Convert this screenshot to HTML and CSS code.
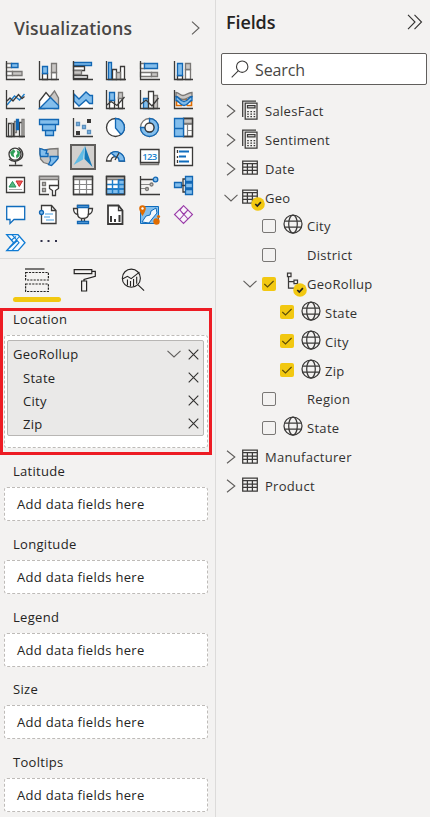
FILE: index.html
```html
<!DOCTYPE html>
<html lang="en">
<head>
<meta charset="utf-8">
<title>Report panes</title>
<link rel="stylesheet" href="styles.css">
</head>
<body>
<svg class="defs" aria-hidden="true">
  <symbol id="right" viewBox="0 0 10 14"><path class="thin" d="M1 .7 8.8 7 1 13.3"/></symbol>
  <symbol id="down" viewBox="0 0 14 8"><path class="thin" d="M.5.8 7 7 13.5.8"/></symbol>
  <symbol id="close" viewBox="0 0 11 11"><path class="thin dark" d="M.7.7l9.6 9.6M10.3.7.7 10.3"/></symbol>
  <symbol id="calc" viewBox="0 0 16 20"><path class="k" d="M.7 17V1.2H14"/><path class="k" d="M3.2 3.2H15V19H3.2z"/><path class="k" d="M5.5 5.5h7.5v2.3H5.5z"/><path class="k dots" d="M5.2 11.5h9M5.2 14h9M5.2 16.5h9"/></symbol>
  <symbol id="table" viewBox="0 0 16 15"><path class="k" d="M.7 1h14.6v13H.7zM.7 3.6h14.6M.7 7h14.6M.7 10.4h14.6M5.4 3.6V14M10.4 3.6V14"/></symbol>
  <symbol id="globe" viewBox="0 0 20 20"><circle class="k" cx="10" cy="10" r="9"/><ellipse class="k" cx="10" cy="10" rx="4.3" ry="9"/><path class="k" d="M1.5 7h17M1.5 13h17"/></symbol>
  <symbol id="tick" viewBox="0 0 14 14"><path class="tickline" d="M2.3 7 5.5 10 11.6 4"/></symbol>
  <symbol id="badge" viewBox="0 0 14 14"><circle cx="7" cy="7" r="6.8" fill="#f2c811"/><path d="M4.3 7l2 2 3.6-3.8" fill="none" stroke="#222" stroke-width="1.7"/></symbol>
</svg>
<div class="app">
<section class="visualizations">
  <header class="viz-head"><h2>Visualizations</h2><svg class="chev-head" viewBox="0 0 9 14"><path class="thin" d="M1 .7 8 7 1 13.300"/></svg></header>
  <div class="gallery">
    <svg viewBox="0 0 20 20"><path class="g w" d="M.5 2.500h5v4h-5zM.5 10.500h6v4h-6z"/><path class="b" d="M5.500 2.500h6.500v4H5.500z"/><path class="g" d="M6.500 10.500h9.500v4H6.500z"/><path class="a" d="M.5 0v18.500H19"/></svg>
    <svg viewBox="0 0 20 20"><path class="g w" d="M12.500 11.500h5v7h-5z"/><path class="d w" d="M3.500 12.500h5v6h-5z"/><path class="b" d="M3.500 5.500h5v7h-5z"/><path class="g" d="M12.500 2.500h5v9h-5z"/><path class="a" d="M.5 0v18.500H20"/></svg>
    <svg viewBox="0 0 20 20"><path class="b" d="M.5 1.500h18v3H.5z"/><path class="d w" d="M.5 5.500h11v4H.5zM.5 14.500h14v3H.5z"/><path class="g" d="M.5 9.500h8v4h-8z"/><path class="a" d="M.5 0v18.500H20"/></svg>
    <svg viewBox="0 0 20 20"><path class="b" d="M2.500 1.500h3v17h-3z"/><path class="d w" d="M6.500 8.500h4v10h-4zM14.500 5.500h4v13h-4z"/><path class="g" d="M10.500 11.500h4v7h-4z"/><path class="a" d="M.5 0v18.500H20"/></svg>
    <svg viewBox="0 0 20 20"><path class="g w" d="M.5 2.500h4v5h-4zM.5 11.500h11v4H.5z"/><path class="b" d="M4.500 2.500h13v5h-13z"/><path class="g" d="M11.500 11.500h6v4h-6z"/><path class="a" d="M.5 0v18.500H20"/></svg>
    <svg viewBox="0 0 20 20"><path class="g w" d="M11.500 8.500h5v10h-5z"/><path class="d w" d="M3.500 14.500h5v4h-5z"/><path class="b" d="M3.500 2.500h5v12h-5z"/><path class="g" d="M11.500 2.500h5v6h-5z"/><path class="a" d="M.5 0v18.500H19"/></svg>

    <svg viewBox="0 0 20 20"><path class="bl" d="M1 15 8.500 6l5 4L18.500 4"/><path class="a" d="M1 11 4 8l3 3 5.500-6.500 3.500 4 2.500-2M.5 0v18.500H19"/></svg>
    <svg viewBox="0 0 20 20"><path class="g" d="M10 8 15.500 1l4 7v10.500H15z"/><path class="d w" d="M.5 11 7 2.500l6 7L6 18.500H.5z"/><path class="b" d="M.5 18.500 11.500 7.500l8 8v3z"/></svg>
    <svg viewBox="0 0 20 20"><path class="w" d="M1 13l5 3 7-5 6 4v4H1z"/><path class="b" d="M1 4l5 5 7-7 4 3.500h2.500v8h-3L13 10l-7 6-5-5z"/><path class="a" d="M.5 0v18.500H20"/></svg>
    <svg viewBox="0 0 20 20"><path class="d w" d="M3.500 9.500h5v9h-5zM12.500 7.500h4v11h-4z"/><path class="b" d="M3.500 2.500h5v8h-5z"/><path class="g" d="M12.500 2.500h4v6h-4z"/><path class="a" d="M1 15l4-3.500 6 4L18.500 7M.5 0v18.500H19"/></svg>
    <svg viewBox="0 0 20 20"><path class="g" d="M13.500 5.500h4v13h-4z"/><path class="b" d="M3.500 8.500h5v10h-5z"/><path class="d w" d="M8.500 1.500h5v17h-5z"/><path class="a" d="M1 14l5-4 6 6 6.500-8M.5 0v18.500H20"/></svg>
    <svg viewBox="0 0 20 20"><path class="w" d="M2 12h4v4H2zM14 12h4v4h-4z"/><path d="M2.500 11.500h3l2-2h5l2 2h3v4h-4l-3-3-3 3h-5z" fill="none" stroke="#e06c00" stroke-width="1.600"/><path class="g" d="M2 2.500c3 0 4 3 7 3s5-3 9-3v4c-4 0-5 3-9 3s-5-3-7-3z"/><path class="b" d="M2 6.500c3 0 4 5 8 5s5-5 8-5v4c-3 0-4 5-8 5s-5-5-8-5z"/><path class="a" d="M.5 0v18.500H19"/></svg>

    <svg viewBox="0 0 20 20"><path class="d w" d="M2.500 5.500h3v13h-3zM13.500 4.500h3v14h-3z"/><path class="g" d="M5.500 5.500h3v13h-3zM8.500 3.500h2v11h-2zM16 1.500h2v17h-2z"/><path class="b solid" d="M10.500 1.500h2v10h-2z"/><path class="a" d="M.5 0v18.500H19M7.500 5v13"/></svg>
    <svg viewBox="0 0 20 20"><path class="b" d="M.5 1.500h19v5H.5zM3.500 6.500h13v6h-13zM6.500 12.500h8v5h-8z"/></svg>
    <svg viewBox="0 0 20 20"><path d="M14 1h4v4h-4zM3 13h4v4H3z" fill="#3b3a39"/><path class="b faint" d="M3.500 4.500h3v3h-3zM9.500 7.500h3v3h-3zM14.500 12.500h3v3h-3z"/><path class="a" d="M.5 0v18.500H20"/></svg>
    <svg viewBox="0 0 20 20"><circle class="d w" cx="9.500" cy="9.500" r="9"/><path class="b" d="M9.500.500a9 9 0 0 1 5.500 16L9.500 10z"/></svg>
    <svg viewBox="0 0 20 20"><circle class="g w" cx="9.500" cy="9.500" r="9"/><path class="b" d="M9.500.500a9 9 0 1 1-9 9H5a4.500 4.500 0 1 0 4.500-4.500z"/><circle class="d bg" cx="9.500" cy="9.500" r="4.500"/></svg>
    <svg viewBox="0 0 20 20"><path class="d w" d="M9.500.500h9v18h-9z"/><path class="g" d="M9.500.500h9v5h-9z"/><path class="gl" d="M9.500 6.500h9M13.500 6.500v12M13.500 12.500h5"/><path class="a" d="M9.500.500h9v18h-9"/><path class="b" d="M.5.500h9v10h-9zM.500 10.500h9v8h-9z"/></svg>

    <svg viewBox="0 0 20 20"><path class="a" d="M12.500.500c5 3 5.500 8.500 2 11.500s-8.500 3-11.500 0M9.500 14v3.500M3 18.500h13.500"/><circle class="d w" cx="9" cy="7.200" r="6"/><path d="M4 5.500l3.500-3.300 2 2L7.500 7l1 3.500L5.500 9zM10.500 3l3.500 2-.5 4-3 2.500-.5-3 1.500-2z" fill="#2f9e58"/></svg>
    <svg viewBox="0 0 20 20"><path class="g" d="M1 1.500l5 1.500 5-1 8-.500v9l-2.500 3-4 4.500-3-1-5-1.500-3-3.500V9.500L1 7z"/><path class="b" d="M1 1.500l5 1.500h2l-1 3.500h2V9.500H1.500L1 7zM11 9.500h8v2l-2.500 3-4 4-3-1 2-4z"/></svg>
    <div class="selected"><svg viewBox="0 0 26 26"><path d="M15 2 3.500 21 13 15.500z" fill="#5ebbe6"/><path d="M15 2v12l-2 1.500z" fill="#a2d8ef"/><path d="M15 2 22.500 23 14.500 15z" fill="#1478b8"/></svg></div>
    <svg viewBox="0 0 20 20"><path class="d w" d="M.5 14A9 9 0 0 1 18.500 14H14a4.500 4.500 0 0 0-9 0z"/><path class="b" d="M5 6a9 9 0 0 1 13.500 8H13c0-2-1-4-3-4z"/><path class="a" d="M13 6l-4 7"/></svg>
    <svg viewBox="0 0 20 20"><path class="g" d="M.5 14h18v3.500H.500z"/><path class="d w" d="M.5 2.500h18.500v13H.500z"/><text x="2.200" y="12.900" font-size="9.500" textLength="15" class="num">123</text></svg>
    <svg viewBox="0 0 20 20"><path class="d w" d="M.5.500h18v18H.500z"/><path d="M3.500 3v3M3.500 9v2M3.500 13v3" stroke="#3b3a39" stroke-width="1.300"/><path d="M5 4.500h10M5 9.500h7M5 14.500h10" stroke="#0f6cbd" stroke-width="2"/></svg>

    <svg viewBox="0 0 20 20"><path class="d w" d="M.5 1.500h18v15H.500z"/><path d="M3 11l3.500-5.500L10 11z" fill="#56b982" stroke="#25905a"/><path d="M10 5h6.500l-3.200 5.500z" fill="#f05a5a" stroke="#cf2e2e"/><path d="M3 13.500h13" stroke="#aaa"/></svg>
    <svg viewBox="0 0 20 20"><path class="d w" d="M.5.500h19v18H.500z"/><path class="g" d="M.5.500h19v3H.500zM3.500 6.500h3v3h-3zM3.500 12.500h3v3h-3z"/><path d="M10 9h11v11H10z" fill="#f3f2f1"/><path class="d w" d="M10.500 9.500h9v3l-3 2v5h-3v-5l-3-2z"/></svg>
    <svg viewBox="0 0 20 20"><path class="d w" d="M.5.500h19v18H.500z"/><path class="g" d="M.5.500h19v3H.500z"/><path class="gl" d="M.5 8.500h19M.5 13.500h19M6.500 4v14M13.500 4v14"/><path class="a" d="M.5.500h19v18H.500z"/></svg>
    <svg viewBox="0 0 20 20"><path class="d w" d="M.5.500h18v18H.500z"/><path class="g" d="M.5.500h18v3H.500z"/><path class="b" d="M12.500 4h6v14h-6zM.5 13h18v5H.500z"/><path class="bl" d="M.5 8.500h18M.5 13h18M6.500 4v14M12.500 4v14"/><path class="a" d="M.5.500h18v18H.500z"/></svg>
    <svg viewBox="0 0 20 20"><path class="gl" d="M.5 8.500h10M.5 12.500h6"/><path class="a" d="M.5 3.500h13M.5 0v18.500H20"/><circle class="b" cx="15.500" cy="3.500" r="2.300"/><circle class="g" cx="11.500" cy="8.500" r="1.500"/><circle class="g" cx="7" cy="13" r="1.500"/></svg>
    <svg viewBox="0 0 20 20"><path class="a" d="M6 9.500h6M12 3h-3v13h3"/><path class="b" d="M.5 6.500h7v5h-7zM11.500.500h7v5h-7zM11.500 7h7v5h-7zM11.500 13.500h7v5h-7z"/></svg>

    <svg viewBox="0 0 20 20"><path d="M.7 1.500h18v13H8l-4 4v-4H.700z" fill="#fff" stroke="#0f6cbd" stroke-width="1.300"/></svg>
    <svg viewBox="0 0 20 20"><path class="d w" d="M2.500.500h10l4.500 5v13H2.500z"/><path class="a" d="M12.500.500v5H17"/><path d="M6 9h8M5 12h6M7 15h8" stroke="#83beec" stroke-width="1.400"/><circle class="b" cx="2.500" cy="7.500" r="2"/></svg>
    <svg viewBox="0 0 20 20"><path class="d w" d="M4.500.500h11v8c0 3-2 5-5.500 5s-5.500-2-5.500-5zM4.500 3.500h-4c0 4 1 6 5 6M15.500 3.500h4c0 4-1 6-5 6M8.500 13.500h3v3h-3z"/><path class="b" d="M4.500.500h11v2h-11zM4.500 16.500h11v2h-11z"/></svg>
    <svg viewBox="0 0 20 20"><path class="d w heavy" d="M2 .500h10.500l4 5V19H2z"/><path class="a" d="M12.500.500v5H17"/><path d="M5 11v6M9 14v3M13.500 10v7" stroke="#3b3a39" stroke-width="2"/></svg>
    <svg viewBox="0 0 20 20"><path d="M.5 1.500h18v17H.500z" fill="#83beec" stroke="#0f6cbd"/><path d="M2 17l4-6 4-1 1-4 5-3 1 5-5 6-3 4z" fill="#f3f8fc" stroke="#0f6cbd"/><path d="M2.500 11S-.8 6-.8 3.500a3.300 3.300 0 0 1 6.600 0C5.800 6 2.500 11 2.500 11z" fill="#e06c00"/><circle cx="2.500" cy="3.500" r="1.200" fill="#fff"/><circle cx="16.500" cy="16.500" r="3.200" fill="#e06c00"/><circle cx="18.500" cy="11.500" r="1.600" fill="#e06c00"/></svg>
    <svg viewBox="0 0 20 20"><path d="M9.500.700 18.500 9.500l-9 9-9-9zM6 5l8 9M14 5l-8 9M9.500.700 14 5 9.500 9.500 6 5z" fill="#f8f2fa" stroke="#9a3ca8" stroke-width="1.100"/></svg>

    <svg viewBox="0 0 20 20"><path d="M.7.700H12l7 8-7 8H.700l7-8z" fill="#f5faff" stroke="#0f7bd4" stroke-width="1.300"/><path d="M6 .700l7 8-7 8M5.500 6l4.500-3.500M8 8.500l5-5.500M3.500 13.500l8-7" fill="none" stroke="#0f7bd4" stroke-width="1.100"/></svg>
    <svg viewBox="0 0 20 20"><path d="M1.500 7h2M8.500 7h2M16 7h2" stroke="#30304a" stroke-width="2"/></svg>
  </div>
  <nav class="tabs">
    <svg viewBox="0 0 24 24"><path class="t" d="M0 1h19.500"/><path class="t dash" d="M.6 4.500h22.800v7.500H.600zM.6 16h22.800v7.500H.600z"/></svg>
    <svg viewBox="0 0 24 24"><path class="t" d="M1.200 1.600h17.600v4H1.200zM18.800 3.300h3.500v5L11 11.500V13M8.600 13h5v10h-5z"/></svg>
    <svg viewBox="0 0 26 26"><circle class="t" cx="11.200" cy="11" r="9.800"/><path class="t" d="M18.500 18.200 25 24.500M1.500 12 7 9l4 2.500L20 4.500M7 12.500V19M10.300 14v6M13.600 12v8M17 9.500V17"/></svg>
  </nav>
  <div class="tab-line"></div>
  <div class="location">
    <h3>Location</h3>
    <div class="well">
      <div class="pill">
        <div class="item"><span>GeoRollup</span><svg class="down"><use href="#down"/></svg><svg class="close"><use href="#close"/></svg></div>
        <div class="item sub"><span>State</span><svg class="close"><use href="#close"/></svg></div>
        <div class="item sub"><span>City</span><svg class="close"><use href="#close"/></svg></div>
        <div class="item sub"><span>Zip</span><svg class="close"><use href="#close"/></svg></div>
      </div>
    </div>
  </div>
  <div class="bucket"><h3>Latitude</h3><div class="drop">Add data fields here</div></div>
  <div class="bucket"><h3>Longitude</h3><div class="drop">Add data fields here</div></div>
  <div class="bucket"><h3>Legend</h3><div class="drop">Add data fields here</div></div>
  <div class="bucket"><h3>Size</h3><div class="drop">Add data fields here</div></div>
  <div class="bucket"><h3>Tooltips</h3><div class="drop">Add data fields here</div></div>
</section>
<section class="fields">
  <header class="fields-head"><h2>Fields</h2><svg viewBox="0 0 16 16"><path class="thin dark" d="M1 .8 8 8 1 15.200M7.500.800l7 7.200-7 7.200"/></svg></header>
  <div class="search"><svg viewBox="0 0 18 18"><circle class="k thinl" cx="11.200" cy="6.700" r="5.700"/><path class="k thinl" d="M7.200 10.800.700 17.300"/></svg><span>Search</span></div>
  <div class="tree">
    <div class="row"><svg class="arrow"><use href="#right"/></svg><i class="icon"><svg class="calc"><use href="#calc"/></svg></i><span>SalesFact</span></div>
    <div class="row"><svg class="arrow"><use href="#right"/></svg><i class="icon"><svg class="calc"><use href="#calc"/></svg></i><span>Sentiment</span></div>
    <div class="row"><svg class="arrow"><use href="#right"/></svg><i class="icon"><svg class="table"><use href="#table"/></svg></i><span>Date</span></div>
    <div class="row"><svg class="arrow open"><use href="#down"/></svg><i class="icon"><svg class="table"><use href="#table"/></svg><svg class="badge"><use href="#badge"/></svg></i><span>Geo</span></div>
    <div class="row child"><i class="box"></i><i class="kind"><svg><use href="#globe"/></svg></i><span>City</span></div>
    <div class="row child"><i class="box"></i><i class="kind"></i><span>District</span></div>
    <div class="row group"><svg class="arrow open"><use href="#down"/></svg><i class="box on"><svg><use href="#tick"/></svg></i><i class="kind"><svg viewBox="0 0 20 20"><path class="k" d="M4.500 1.200h3.500v3.500H4.500zM5.500 4.700V16H11M5.500 9.500H11M11 8h3.500v3.500H11z"/></svg><svg class="badge"><use href="#badge"/></svg></i><span>GeoRollup</span></div>
    <div class="row leaf"><i class="box on"><svg><use href="#tick"/></svg></i><i class="kind"><svg><use href="#globe"/></svg></i><span>State</span></div>
    <div class="row leaf"><i class="box on"><svg><use href="#tick"/></svg></i><i class="kind"><svg><use href="#globe"/></svg></i><span>City</span></div>
    <div class="row leaf"><i class="box on"><svg><use href="#tick"/></svg></i><i class="kind"><svg><use href="#globe"/></svg></i><span>Zip</span></div>
    <div class="row child"><i class="box"></i><i class="kind"></i><span>Region</span></div>
    <div class="row child"><i class="box"></i><i class="kind"><svg><use href="#globe"/></svg></i><span>State</span></div>
    <div class="row"><svg class="arrow"><use href="#right"/></svg><i class="icon"><svg class="table"><use href="#table"/></svg></i><span>Manufacturer</span></div>
    <div class="row"><svg class="arrow"><use href="#right"/></svg><i class="icon"><svg class="table"><use href="#table"/></svg></i><span>Product</span></div>
  </div>
</section>
</div>
</body>
</html>
```
FILE: styles.css
```css
* { box-sizing: border-box; }
body { margin: 0; background: #f3f2f1; color: #252423; font: 13px/20px "Open Sans", "Noto Sans", sans-serif; letter-spacing: .3px; }
h2, h3 { margin: 0; }
h2 { font-size: 18px; line-height: 24px; font-weight: 600; letter-spacing: -.1px; }
h3 { font-size: 13px; line-height: 20px; font-weight: 400; }
svg { display: block; overflow: visible; flex: none; }
.defs { position: absolute; width: 0; height: 0; }
.app { display: flex; height: 817px; overflow: hidden; }

.thin { fill: none; stroke: #605e5c; stroke-width: 1.1; }
.dark { stroke: #323130; }
.k { fill: none; stroke: #3b3a39; stroke-width: 1.25; }
.thinl { stroke-width: 1.1; }
.dots { stroke-dasharray: 1.6 1.6; }
.tickline { fill: none; stroke: #5d4d08; stroke-width: 1.1; }
.a { fill: none; stroke: #3b3a39; stroke-width: 1.3; }
.d { stroke: #3b3a39; stroke-width: 1.3; }
.g { fill: #c8c6c4; stroke: #797775; stroke-width: 1.3; }
.b { fill: #83beec; stroke: #1267b4; stroke-width: 1.3; }
.w { fill: #fff; }
.bg { fill: #f3f2f1; }
.solid { fill: #1267b4; }
.faint { stroke: #5b8fbd; }
.heavy { stroke-width: 1.8; }
.bl { fill: none; stroke: #1e7fcb; stroke-width: 1.4; }
.gl { fill: none; stroke: #888; stroke-width: 1.2; }
.t { fill: none; stroke: #252423; stroke-width: 1.2; }
.dash { stroke-dasharray: 2.2 1.1; }
.num { fill: #2185d0; font-family: "Open Sans", sans-serif; font-weight: 600; letter-spacing: 0; }

.visualizations { width: 216px; flex: none; border-right: 1px solid #dcdbda; }
.viz-head { display: flex; justify-content: space-between; align-items: center; height: 61px; padding: 0 15px 6px 14px; }
.viz-head h2 { color: #484644; font-size: 17.5px; letter-spacing: .15px; }
.chev-head { width: 9px; height: 14px; }
.gallery { display: grid; grid-template-columns: 33px 34px 33px 34px 34px 20px; grid-template-rows: 29px 28px 29px 29px 29px 29px 24px; padding-left: 6px; }
.gallery > svg { width: 20px; height: 20px; }
.selected { width: 26px; height: 26px; margin: -3px 0 0 -3px; background: #d2d0ce; border: 2px solid #605e5c; }
.selected svg { width: 26px; height: 26px; margin: -2px; }
.tabs { display: flex; gap: 24px; height: 39px; padding: 9px 0 0 25px; border-top: 1px solid #dcdbda; }
.tabs svg { width: 24px; height: 24px; }
.tab-line { width: 48px; height: 5px; margin-left: 13px; border-radius: 3px; background: #f2c811; }

.location { width: 212px; height: 147px; margin-top: 6px; border: 3px solid #ed1c24; padding: 0 1px; }
.location h3 { height: 24px; padding: 0 9px; line-height: 16px; }
.well { height: 113px; border: 1px dashed #bebbb8; border-radius: 3px; background: #fff; padding: 4px 3px 0 2px; }
.pill { height: 96px; border: 1px solid #b8b6b4; border-radius: 2px; background: #eae9e8; padding: 1px 4px 0 5px; }
.item { display: flex; align-items: center; height: 23px; }
.item:first-child { height: 24px; }
.item span { flex: 1; }
.sub { padding-left: 10px; }
.down { width: 14px; height: 8px; margin-right: 7px; }
.close { width: 11px; height: 11px; }
.bucket { height: 72.75px; }
.bucket h3 { height: 32px; padding-left: 13px; line-height: 32px; }
.drop { width: 204px; height: 34px; margin-left: 4px; padding-left: 12px; line-height: 33.6px; border: 1px dashed #bebbb8; border-radius: 3px; background: #fff; }

.fields { flex: 1; }
.fields-head { display: flex; justify-content: space-between; align-items: center; height: 53px; padding: 0 7px 9px 10px; }
.fields-head svg { width: 16px; height: 16px; }
.search { display: flex; align-items: center; gap: 6px; width: 206px; height: 32px; margin-left: 5px; padding-left: 9px; border: 1px solid #605e5c; border-radius: 2px; background: #fff; color: #484644; font-size: 16px; letter-spacing: -.1px; }
.search span { padding-top: 2px; }
.search svg { width: 18px; height: 18px; }
.tree { padding-top: 11.7px; }
.row { display: flex; align-items: center; height: 28.83px; padding-left: 10px; }
.row span { color: #323130; }
.arrow { width: 10px; height: 14px; margin-right: 6px; }
.arrow.open { width: 14px; height: 8px; margin: 0 4px 0 -2px; }
.icon { position: relative; width: 16px; margin-right: 7px; }
.calc { width: 16px; height: 20px; margin-top: -2px; }
.table { width: 16px; height: 15px; margin-top: -2px; }
.kind { position: relative; width: 20px; height: 20px; margin: -4px 4px 0 7px; }
.kind svg { width: 20px; height: 20px; }
.icon .badge, .kind .badge { position: absolute; width: 14px; height: 14px; }
.icon .badge { left: 9px; top: 6px; }
.kind .badge { left: 10px; top: 11px; }
.box { width: 14px; height: 14px; margin-top: -1px; border: 1px solid #797775; border-radius: 2px; }
.box.on { border: 0; background: #f2c811; }
.box svg { width: 14px; height: 14px; }
.child { padding-left: 46px; }
.group { padding-left: 29px; }
.group .arrow.open { margin-right: 5px; }
.leaf { padding-left: 64px; }
```
